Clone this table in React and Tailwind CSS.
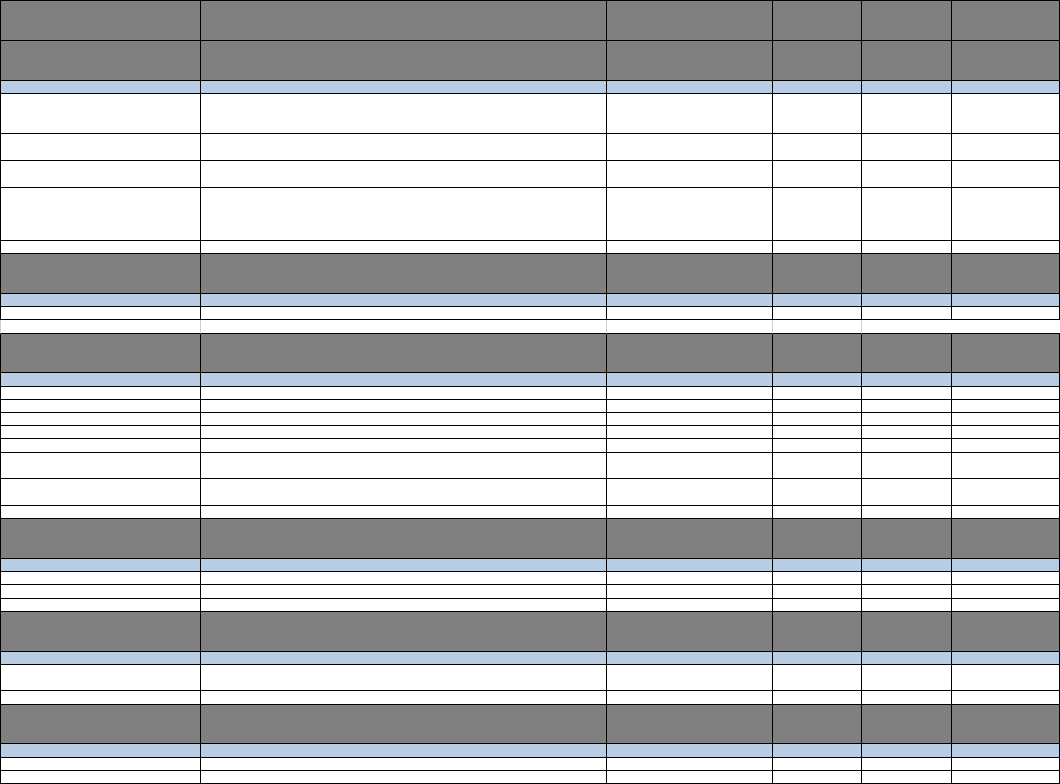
import React from 'react';

// column widths (border-box, first one includes the left border)
const COLS = ['w-[201px]', 'w-[406px]', 'w-[166px]', 'w-[89px]', 'w-[90px]', 'w-[108px]'];

const HEIGHTS = {
  13: 'h-[13px]',
  14: 'h-[14px]',
  26: 'h-[26px]',
  27: 'h-[27px]',
  39: 'h-[39px]',
  40: 'h-[40px]',
  53: 'h-[53px]',
};

const FILL = {
  h: 'bg-[#808080]',
  b: 'bg-[#b8cce4]',
  w: 'bg-white',
};

// [height, kind] — h: grey header, b: blue band, w: white row, g: unbordered gap row
const ROWS = [
  [40, 'h'], [40, 'h'], [13, 'b'], [40, 'w'], [27, 'w'], [27, 'w'], [53, 'w'], [13, 'w'],
  [40, 'h'], [13, 'b'], [13, 'w'], [14, 'g'],
  [39, 'h'], [14, 'b'], [13, 'w'], [13, 'w'], [13, 'w'], [13, 'w'], [14, 'w'], [26, 'w'], [27, 'w'], [13, 'w'],
  [40, 'h'], [13, 'b'], [13, 'w'], [14, 'w'], [13, 'w'],
  [40, 'h'], [13, 'b'], [26, 'w'], [14, 'w'],
  [39, 'h'], [14, 'b'], [13, 'w'], [13, 'w'],
];

const GapRow = ({ h }) => (
  <div className={`flex ${HEIGHTS[h]} bg-white`}>
    {COLS.map((w, i) => {
      const left = i === 0 ? 'border-l border-l-[#d0d0d0]' : '';
      const right = i < 4 ? 'border-r border-r-[#d0d0d0]' : '';
      return <div key={i} className={`${w} shrink-0 box-border border-b border-b-black ${left} ${right}`} />;
    })}
  </div>
);

const Row = ({ h, kind }) => (
  <div className={`flex ${HEIGHTS[h]}`}>
    {COLS.map((w, i) => (
      <div
        key={i}
        className={`${w} shrink-0 box-border border-r border-b border-black ${i === 0 ? 'border-l' : ''} ${FILL[kind]}`}
      />
    ))}
  </div>
);

export default function App() {
  return (
    <div className="w-[1060px] h-[784px] bg-white overflow-hidden font-['Liberation_Sans',sans-serif]">
      <div className="w-[1060px] border-t border-black">
        {ROWS.map(([h, kind], idx) =>
          kind === 'g' ? <GapRow key={idx} h={h} /> : <Row key={idx} h={h} kind={kind} />
        )}
      </div>
    </div>
  );
}
